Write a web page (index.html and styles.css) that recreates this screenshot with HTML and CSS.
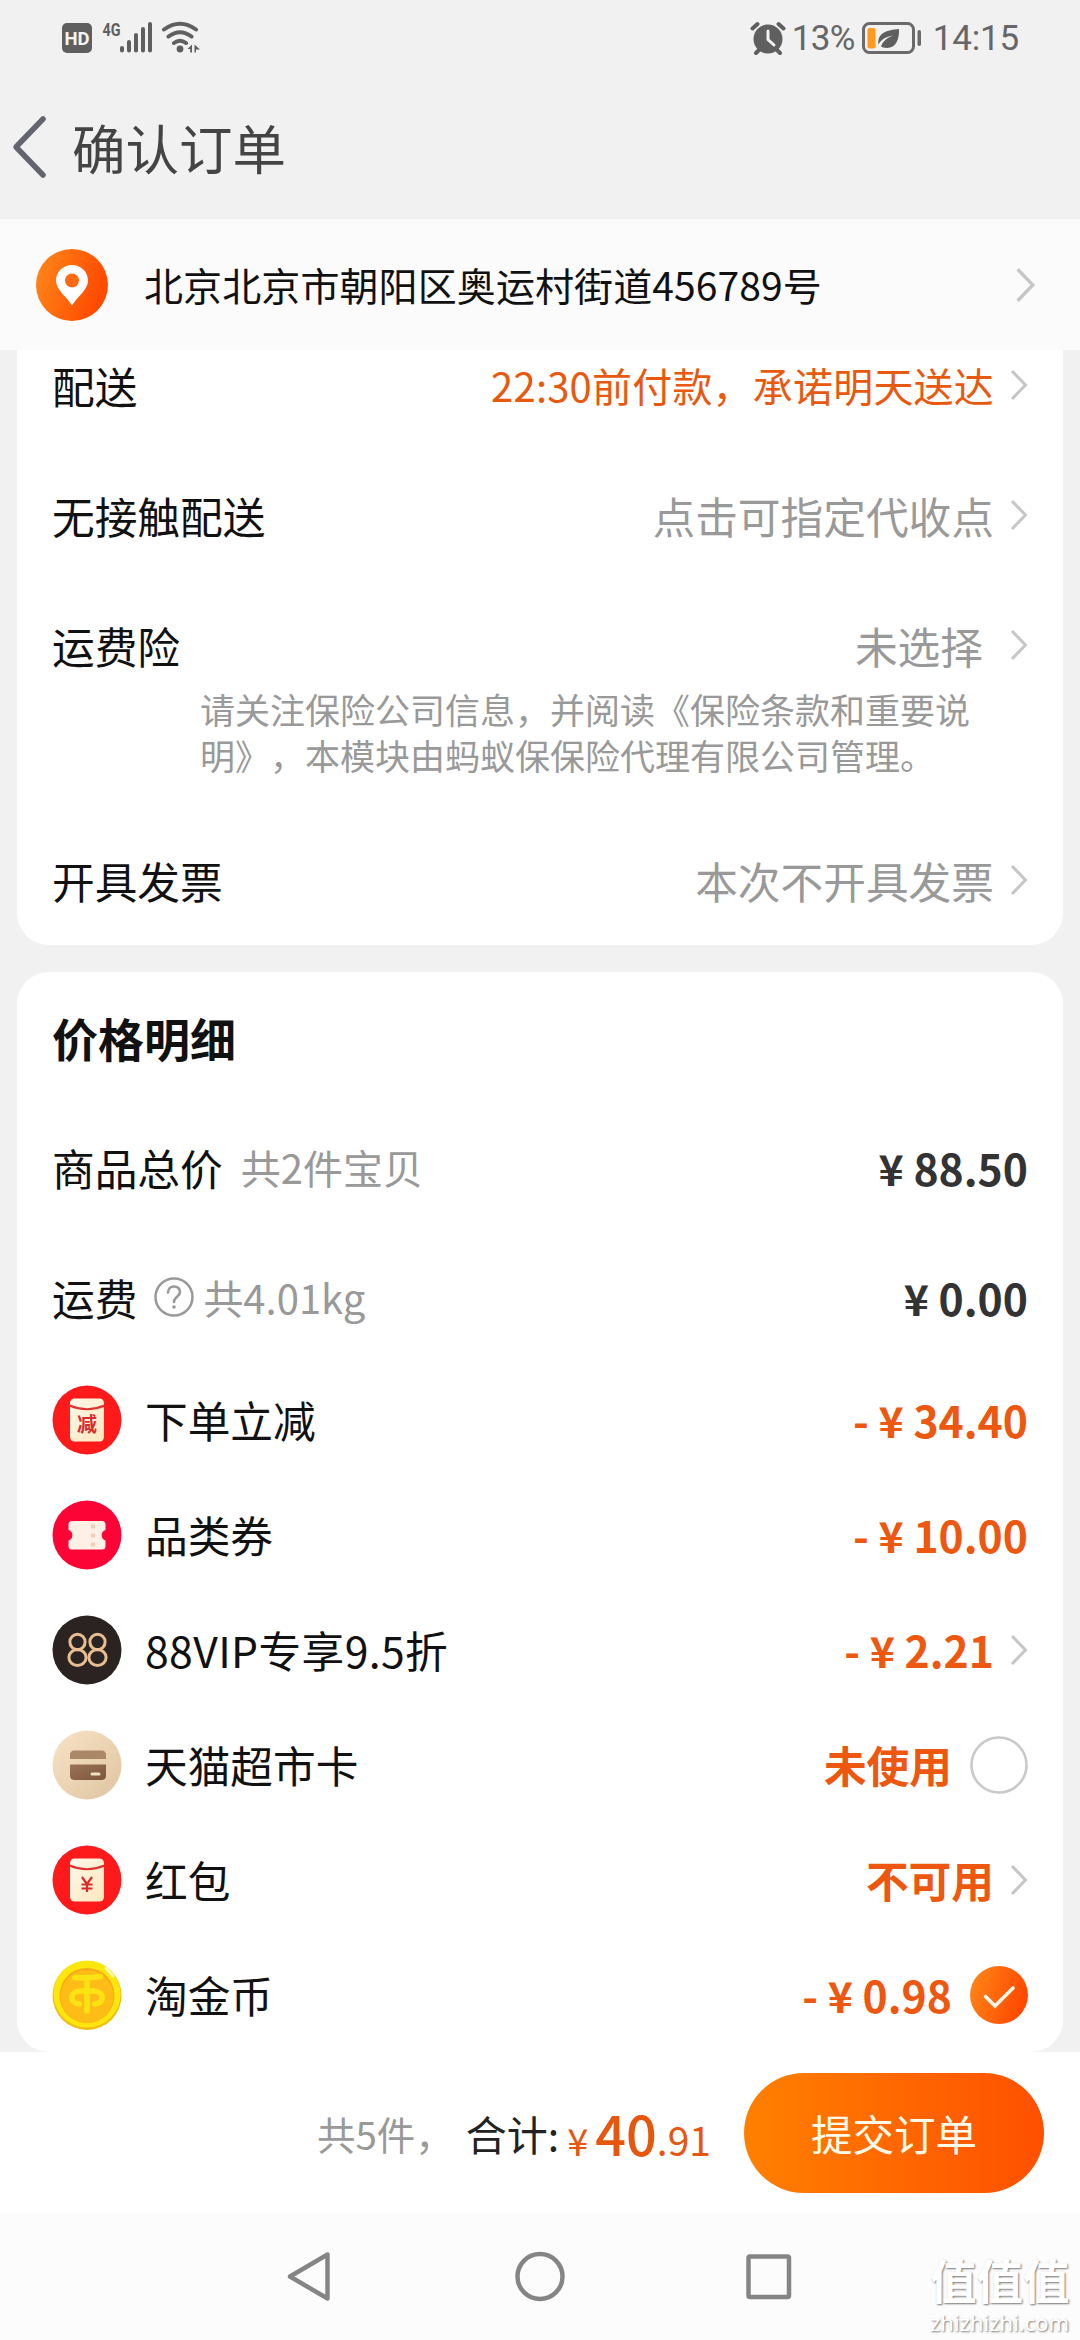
FILE: index.html
```html
<!DOCTYPE html>
<html lang="zh-CN">
<head>
<meta charset="utf-8">
<title>确认订单</title>
<link rel="stylesheet" href="styles.css">
</head>
<body>
<svg width="0" height="0" class="defs" aria-hidden="true">
  <defs>
    <linearGradient id="orange" x1="0" x2="1" y1="0" y2="0.3"><stop offset="0" stop-color="#ff8a1a"/><stop offset="1" stop-color="#ff4a00"/></linearGradient>
    <linearGradient id="cream" x1="0" x2="1" y1="0" y2="1"><stop offset="0" stop-color="#fff8ea"/><stop offset="1" stop-color="#fde7bd"/></linearGradient>
    <linearGradient id="sand" x1="0" x2="1" y1="0" y2="1"><stop offset="0" stop-color="#f8e3c6"/><stop offset="1" stop-color="#dfc4a0"/></linearGradient>
    <linearGradient id="brown" x1="0" x2="1" y1="0" y2="1"><stop offset="0" stop-color="#9a7355"/><stop offset="1" stop-color="#7c573d"/></linearGradient>
    <symbol id="chevron" viewBox="0 0 18 32"><path d="M2 2l13.500 14L2 30" fill="none" stroke="#c6c6c6" stroke-width="3"/></symbol>
  </defs>
</svg>
<div class="screen">
  <header class="top">
    <div class="status">
      <svg class="status-left" width="142" height="40" viewBox="60 18 142 40">
        <rect x="62" y="23" width="30" height="30" rx="5" fill="#5f5f5f"/>
        <text x="77" y="45" text-anchor="middle" class="hd">HD</text>
        <text x="102.500" y="36" class="g4" textLength="18" lengthAdjust="spacingAndGlyphs">4G</text>
        <g fill="#5f5f5f">
          <rect x="120" y="46" width="4" height="6.500" rx="2"/><rect x="127" y="40" width="4" height="12.500" rx="2"/><rect x="134" y="33" width="4" height="19.500" rx="2"/><rect x="141" y="27" width="4" height="25.500" rx="2"/><rect x="148" y="22" width="4" height="30.500" rx="2"/>
          <circle cx="180" cy="49" r="3.400"/>
          <path d="M192 44.500v8h-1.800v-3.500h-2.700zM194.500 44.500v8h1.500v-3h4z"/>
        </g>
        <path d="M164 29.500Q180 18 196 29.500M168.500 36.500Q180 28 191.500 36.500M174 43Q180 38.500 186 43" fill="none" stroke="#5f5f5f" stroke-width="4" stroke-linecap="round"/>
      </svg>
      <div class="status-right">
        <svg width="36" height="34" viewBox="0 0 36 34">
          <circle cx="18" cy="18" r="14.500" fill="#5f5f5f"/>
          <path d="M2.500 7.500L7.500 3M33.500 7.500L28.500 3M6 32l3-3M30 32l-3-3" stroke="#5f5f5f" stroke-width="4" stroke-linecap="round"/>
          <path d="M18 10v8.500l6 5.500" fill="none" stroke="#f1f1f1" stroke-width="3" stroke-linecap="round"/>
        </svg>
        <span class="pct">13%</span>
        <svg class="battery" width="60" height="34" viewBox="0 0 60 34">
          <rect x="1.500" y="2.500" width="50" height="29" rx="6" fill="none" stroke="#6a6a6a" stroke-width="3"/>
          <rect x="5.500" y="7" width="8" height="20.500" rx="2" fill="#ff9a1f"/>
          <path d="M37 8c.5 10-3 19-12 19-3 0-5-1-6-1.500 2-6 7-9 12-11-7 1-12 4-14.500 9C15 12 25 9 37 8z" fill="#5f5f5f"/>
          <rect x="55.500" y="9" width="3.500" height="16" rx="1.700" fill="#6a6a6a"/>
        </svg>
        <span class="clock">14:15</span>
      </div>
    </div>
    <div class="titlebar">
      <svg width="36" height="64" viewBox="0 0 36 64"><path d="M31 4L4 32 31 60" fill="none" stroke="#62656f" stroke-width="5.500" stroke-linecap="round" stroke-linejoin="round"/></svg>
      <h1>确认订单</h1>
    </div>
  </header>

  <section class="address">
    <svg width="72" height="72" viewBox="0 0 72 72">
      <circle cx="36" cy="36" r="36" fill="url(#orange)"/>
      <path d="M36 16c-9 0-16 7-16 15.500C20 41 31 48 36 56.500 41 48 52 41 52 31.500 52 23 45 16 36 16z" fill="#fff"/>
      <circle cx="36" cy="31.500" r="7" fill="#ff6a10"/>
    </svg>
    <span class="address-text">北京北京市朝阳区奥运村街道456789号</span>
    <svg class="address-arrow" width="21" height="36" viewBox="0 0 18 32"><use href="#chevron"/></svg>
  </section>

  <main>
    <section class="card delivery">
      <div class="row first"><span>配送</span><span class="value promise">22:30前付款，承诺明天送达</span><svg class="chev"><use href="#chevron"/></svg></div>
      <div class="row"><span>无接触配送</span><span class="value">点击可指定代收点</span><svg class="chev"><use href="#chevron"/></svg></div>
      <div class="row insurance"><span>运费险</span><span class="value">未选择</span><svg class="chev"><use href="#chevron"/></svg></div>
      <p class="note">请关注保险公司信息，并阅读《保险条款和重要说明》，本模块由蚂蚁保保险代理有限公司管理。</p>
      <div class="row"><span>开具发票</span><span class="value">本次不开具发票</span><svg class="chev"><use href="#chevron"/></svg></div>
    </section>

    <section class="card prices">
      <h2>价格明细</h2>
      <div class="row"><span>商品总价</span><span class="sub count">共2件宝贝</span><b>¥ 88.50</b></div>
      <div class="row"><span>运费</span>
        <svg class="help" width="40" height="42" viewBox="0 0 40 42"><circle cx="20" cy="21" r="18.500" fill="none" stroke="#999" stroke-width="2.500"/><path d="M14 16.500c0-8 12-8 12-.5 0 5-6 4.500-6 10" fill="none" stroke="#999" stroke-width="2.600" stroke-linecap="round"/><circle cx="20" cy="31" r="1.800" fill="#999"/></svg>
        <span class="sub">共4.01kg</span><b>¥ 0.00</b></div>

      <div class="row discount">
        <svg class="badge" viewBox="0 0 70 70"><circle cx="35" cy="35" r="34.500" fill="#fe1a1b"/><rect x="18" y="13.500" width="34" height="43" rx="4.500" fill="url(#cream)"/><path d="M17.500 20.500Q35 28 52.500 20.500" fill="none" stroke="#e0302c" stroke-width="2"/><text x="35" y="46.500" text-anchor="middle" class="badge-text">减</text></svg>
        <span>下单立减</span><b>- ¥ 34.40</b>
      </div>
      <div class="row discount">
        <svg class="badge" viewBox="0 0 70 70"><circle cx="35" cy="35" r="34.500" fill="#fc0536"/><path d="M20 21h30q3.500 0 3.500 3.500V30a5.500 5.500 0 0 0 0 10.500V46q0 3.500-3.500 3.500H20q-3.500 0-3.500-3.500v-5.500a5.500 5.500 0 0 0 0-10.500v-5.500Q16.500 21 20 21z" fill="#fff0e6"/><path d="M41 24.500v22" stroke="#f3ccb5" stroke-width="4" stroke-dasharray="4 5"/></svg>
        <span>品类券</span><b>- ¥ 10.00</b>
      </div>
      <div class="row discount">
        <svg class="badge" viewBox="0 0 70 70"><circle cx="35" cy="35" r="34.500" fill="#2a2321"/><g fill="none" stroke="#e9bd92" stroke-width="3"><ellipse cx="25.500" cy="27" rx="7.600" ry="7.800"/><ellipse cx="25.500" cy="42.500" rx="8.600" ry="8"/><ellipse cx="45.500" cy="27" rx="7.600" ry="7.800"/><ellipse cx="45.500" cy="42.500" rx="8.600" ry="8"/></g></svg>
        <span class="vip">88VIP专享9.5折</span><b>- ¥ 2.21</b><svg class="chev"><use href="#chevron"/></svg>
      </div>
      <div class="row discount">
        <svg class="badge" viewBox="0 0 70 70"><circle cx="35" cy="35" r="34.500" fill="url(#sand)"/><path d="M18 29v-4q0-4.500 4.500-4.500h27q4.500 0 4.500 4.500v4z" fill="#aa8767"/><path d="M18 34.500h36v11q0 4.500-4.500 4.500h-27q-4.500 0-4.500-4.500z" fill="url(#brown)"/><rect x="38.500" y="42.500" width="10" height="3" rx="1.500" fill="#f4dfc4"/></svg>
        <span>天猫超市卡</span><b>未使用</b>
        <svg class="check" viewBox="0 0 58 58"><circle cx="29" cy="29" r="27.500" fill="#fff" stroke="#c9c9c9" stroke-width="2.600"/></svg>
      </div>
      <div class="row discount">
        <svg class="badge" viewBox="0 0 70 70"><circle cx="35" cy="35" r="34.500" fill="#fe1a1b"/><rect x="18" y="13.500" width="34" height="43" rx="4.500" fill="url(#cream)"/><path d="M17.500 20.500Q35 28 52.500 20.500" fill="none" stroke="#e0302c" stroke-width="2"/><path d="M30 32l5 7 5-7M35 39v8M29.500 39.500h11M29.500 43.500h11" fill="none" stroke="#d92a2c" stroke-width="2.200"/></svg>
        <span>红包</span><b>不可用</b><svg class="chev"><use href="#chevron"/></svg>
      </div>
      <div class="row discount">
        <svg class="badge" viewBox="0 0 70 70"><circle cx="35" cy="35.500" r="34.500" fill="#f2bd13"/><circle cx="35" cy="34" r="33.500" fill="#fde60b"/><circle cx="35" cy="35.500" r="27.500" fill="#f6a91c"/><circle cx="35" cy="36.500" r="26.500" fill="#fdbc16"/><path d="M22.500 17.500q14 1 26-1M35 18v33M27.500 44c-10 0-11-13 1-13h13c12 0 11 13 1 13" fill="none" stroke="#fbe313" stroke-width="5.500" stroke-linecap="round"/><path d="M54 8l7 8" stroke="#fff9b0" stroke-width="3" stroke-linecap="round"/></svg>
        <span>淘金币</span><b>- ¥ 0.98</b>
        <svg class="check" viewBox="0 0 58 58"><circle cx="29" cy="29" r="29" fill="url(#orange)"/><path d="M15.500 30.500l9.500 9.500 18-18" fill="none" stroke="#fff6e8" stroke-width="3.600" stroke-linecap="round"/></svg>
      </div>
    </section>
  </main>

  <footer class="checkout">
    <span class="items">共5件，</span>
    <span class="total-label">合计:</span>
    <span class="total"><span class="yen">¥</span><span class="int">40</span><span class="dec">.91</span></span>
    <button class="submit">提交订单</button>
  </footer>

  <nav class="navbar">
    <svg width="510" height="56" viewBox="285 2249 510 56" fill="none" stroke="#858585" stroke-width="4.500" stroke-linejoin="round">
      <path d="M327.500 2254.500v44L290 2276.500z"/><circle cx="540" cy="2276.500" r="22.500"/><rect x="748.500" y="2256.500" width="40.500" height="40.500" rx="1.500"/>
    </svg>
  </nav>
  <div class="watermark"><span class="wm-name">值值值</span><span class="wm-url">zhizhizhi.com</span></div>
</div>
</body>
</html>
```

FILE: styles.css
```css
* { box-sizing: border-box; margin: 0; padding: 0; }

body {
  width: 1080px;
  height: 2340px;
  overflow: hidden;
  font-family: "Noto Sans CJK SC", "Noto Sans", sans-serif;
  text-spacing-trim: space-all;
  color: #111;
}

.defs { position: absolute; }

.screen {
  position: relative;
  display: flex;
  flex-direction: column;
  width: 1080px;
  height: 2340px;
  background: #f1f1f1;
}

svg { display: block; flex: none; }

/* status bar and title */
.top { height: 219px; }

.status {
  display: flex;
  justify-content: space-between;
  align-items: center;
  height: 76px;
  padding: 0 61px 0 60px;
}

.hd { font: 700 18.500px Roboto, sans-serif; fill: #f5f5f5; }
.g4 { font: 700 19px Roboto, sans-serif; fill: #5f5f5f; }

.status-right {
  display: flex;
  align-items: center;
  font: 400 35px/40px Roboto, sans-serif;
  color: #666;
}

.pct { margin: 2px 0 0 6px; letter-spacing: -.6px; }
.battery { margin-left: 7px; }
.clock { margin: 2px 0 0 11px; letter-spacing: -.2px; }

.titlebar {
  display: flex;
  align-items: center;
  gap: 24px;
  height: 143px;
  padding: 0 0 2px 12px;
}

.titlebar h1 { font-size: 53.500px; line-height: 70px; font-weight: 400; color: #444; }

.address {
  display: flex;
  align-items: center;
  height: 131px;
  padding: 0 44px 0 36px;
  background: #fbfbfb;
}

.address-text { flex: 1; margin: -2px 0 0 36px; font-size: 39px; line-height: 56px; letter-spacing: .1px; }

/* cards */
main { display: flex; flex-direction: column; gap: 27px; height: 1702px; padding: 0 17px; }

.card { background: #fff; padding: 0 35px; font-size: 42.700px; line-height: 60px; }
.delivery { height: 595px; border-radius: 0 0 32px 32px; }
.prices { height: 1080px; border-radius: 32px; }

.row { display: flex; align-items: center; height: 130px; white-space: nowrap; }
.row.first { height: 100px; padding-bottom: 30px; }
.row.insurance { height: 106px; padding-top: 24px; }
.insurance .value { padding-right: 11px; }

.value { margin-left: auto; color: #999; }
.promise { color: #e8590f; font-size: 40px; letter-spacing: .2px; }

.chev { width: 18px; height: 32px; margin-left: 16px; }

.note {
  width: 780px;
  margin: 0 0 37px 148px;
  font-size: 35px;
  line-height: 46px;
  color: #999;
}

h2 { height: 130px; font-size: 46px; line-height: 130px; font-weight: 700; }

.sub { color: #999; font-size: 40px; }
.count { margin-left: 18px; }
.help { margin-left: 17px; margin-right: 9px; }

.row b { margin-left: auto; color: #333; font-weight: 700; }

.discount { height: 115px; }
.discount span, .discount b { padding-bottom: 2px; }
.discount b { color: #ee570f; }
.vip { letter-spacing: .4px; }
.badge { width: 70px; height: 70px; margin: 0 23px 0 0; }
.badge-text { font: 700 20px "Noto Sans CJK SC", sans-serif; fill: #d92a2c; }
.check { width: 58px; height: 58px; margin-left: 18px; }

/* checkout bar */
.checkout {
  display: flex;
  align-items: center;
  justify-content: flex-end;
  height: 162px;
  padding-right: 36px;
  background: #fff;
  white-space: nowrap;
}

.items { color: #999; font-size: 38.500px; }
.total-label { color: #222; font-size: 41px; margin-left: 12px; }
.total { color: #e6560f; line-height: 70px; padding-top: 16px; }
.yen { font-size: 38px; margin: 0 7px 0 8px; }
.int { font-size: 54px; font-weight: 500; }
.dec { font-size: 39px; }

.submit {
  width: 300px;
  height: 120px;
  margin-left: 33px;
  border: 0;
  border-radius: 60px;
  background: linear-gradient(90deg, #ff8000, #ff5000);
  color: #fffbe8;
  font: 400 41.500px/60px "Noto Sans CJK SC", sans-serif;
}

.navbar { display: flex; justify-content: center; align-items: center; height: 126px; background: #fcfcfc; }

.watermark {
  position: absolute;
  left: 930px;
  top: 2249px;
  width: 146px;
  color: #fff;
  text-shadow: 1px 1px 2px #777;
}

.wm-name { display: block; font-size: 46.500px; line-height: 60px; font-weight: 700; white-space: nowrap; }
.wm-url { display: block; font: 400 22px/26px "Noto Sans", sans-serif; white-space: nowrap; }
```
